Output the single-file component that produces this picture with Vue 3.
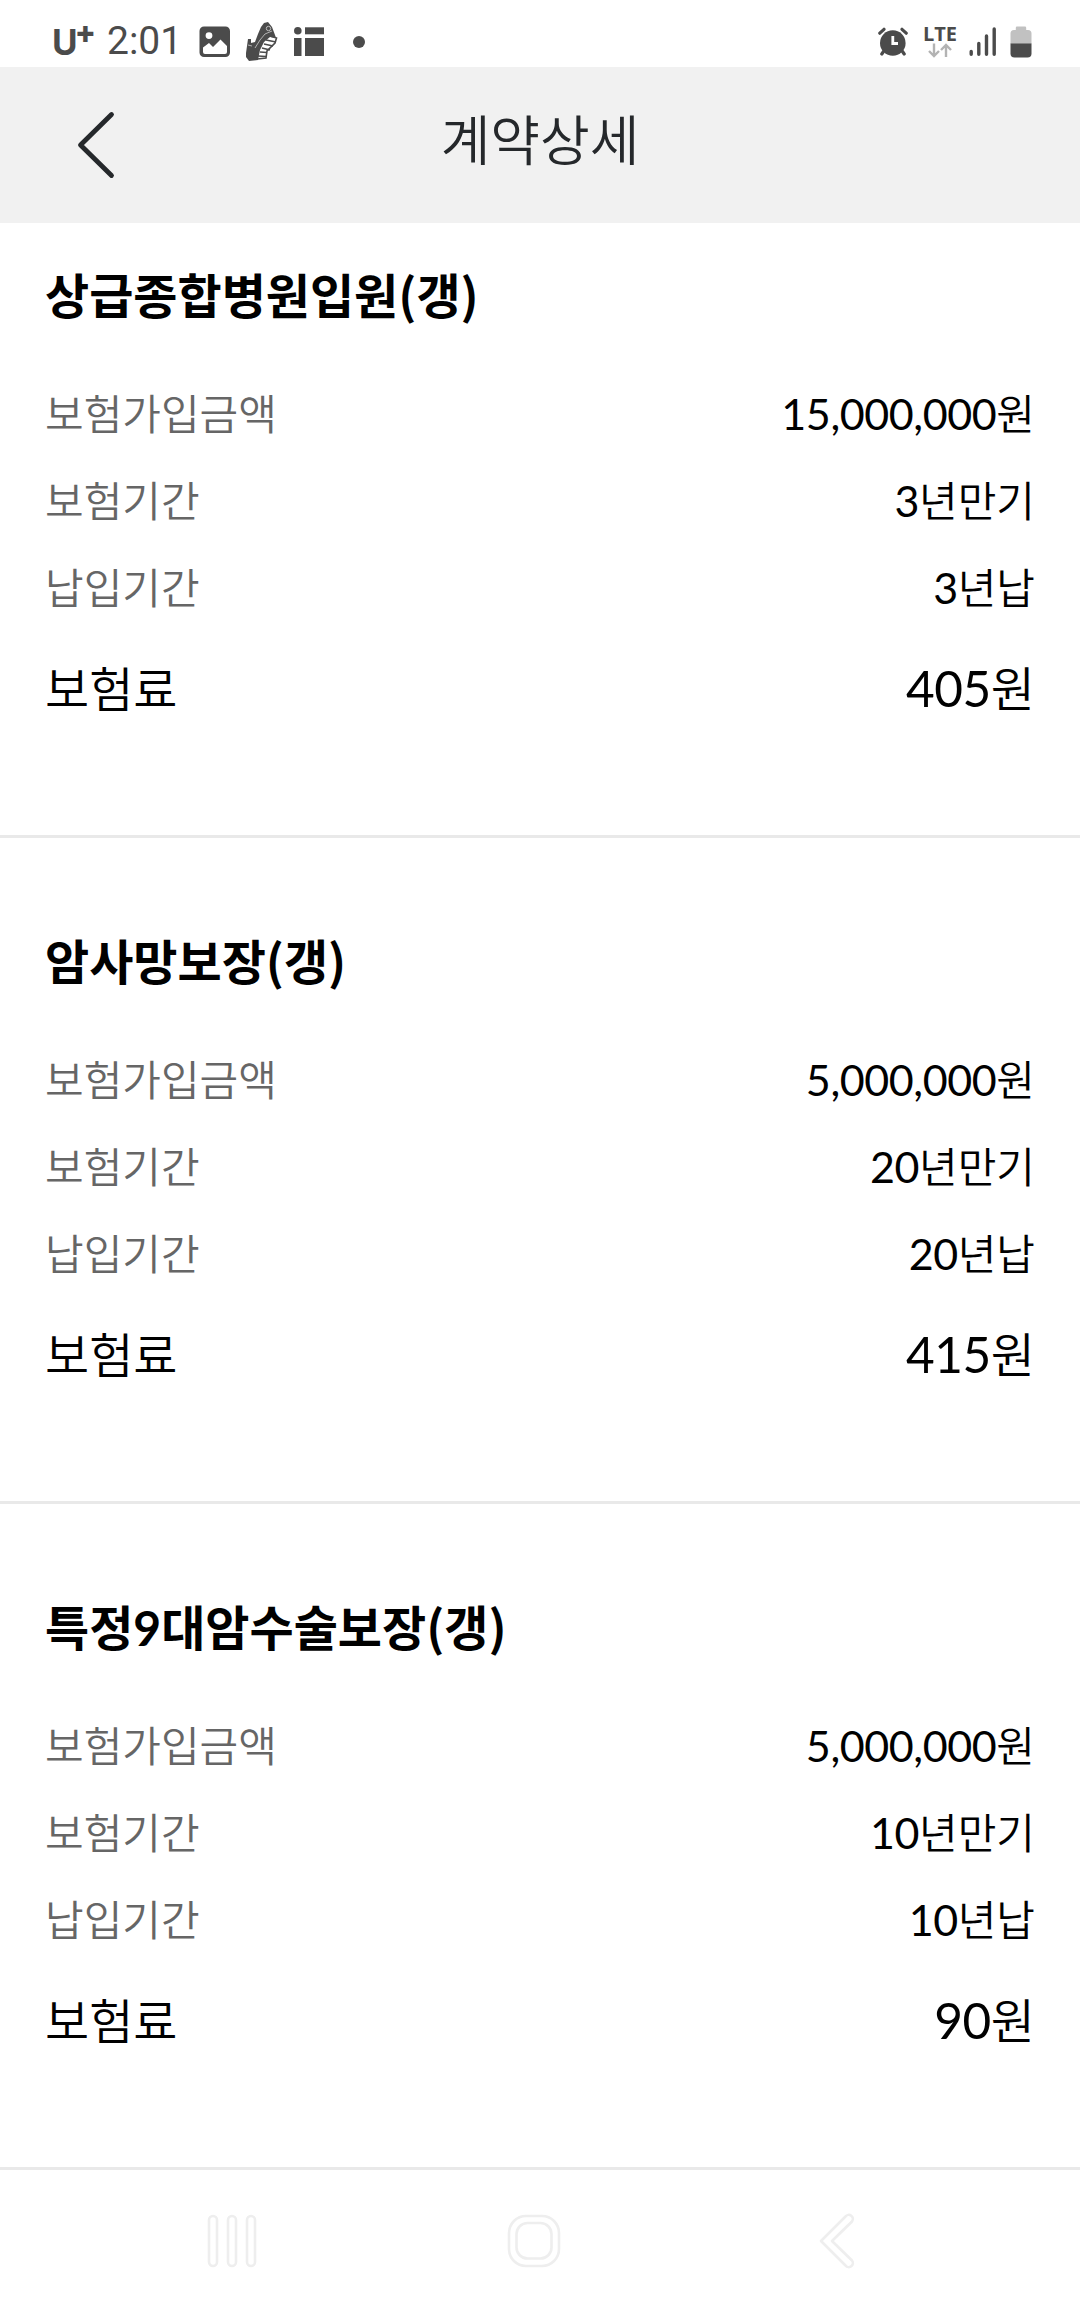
<template>
  <div class="screen">
    <div class="status-bar">
      <div class="status-left">
        <span class="carrier">U<span class="carrier-plus">+</span></span>
        <span class="clock">2:01</span>
        <svg class="ic-photo" width="32" height="32" viewBox="0 0 32 32">
          <path
            fill="#4b4b4b"
            fill-rule="evenodd"
            d="M5 0.5h21.5a4.5 4.5 0 0 1 4.5 4.5v21.500a4.500 4.500 0 0 1-4.500 4.500H5a4.500 4.500 0 0 1-4.500-4.500V5A4.500 4.500 0 0 1 5 .5zM10 6.200a3.400 3.400 0 1 0 0 6.800a3.400 3.400 0 0 0 0-6.800zM4 21.500V26q0 2 2 2h20q2 0 2-2v-6l-6.500-6.500l-7.500 7.500l-4-4z"
          />
        </svg>
        <svg class="ic-shoe" width="32" height="40" viewBox="0 0 32 40">
          <path fill="#4b4b4b" d="M0 31L1 24L2 17L5 17L5 21L9 20L12 12L15 5L18 1L22 0L26 5L29 13L30 16L24 15L18 20L14 28L12 38L3 39L0 35z" />
          <path d="M24 14L30.500 16L29 21L21 29L20 36L11 37" fill="none" stroke="#4b4b4b" stroke-width="1.600" />
          <path d="M20 18l10 2M18 22l9 2M16 26l8 2M14 30l7 .5M12 34l8 .5" stroke="#4b4b4b" stroke-width="1.700" />
          <path d="M9 26L14 18L19 12L26 9M2 23l4 1" fill="none" stroke="#bdbdbd" stroke-width="0.900" />
          <circle cx="22.500" cy="6.500" r="2.200" fill="none" stroke="#bdbdbd" stroke-width="1" />
        </svg>
        <svg class="ic-board" width="30" height="30" viewBox="0 0 30 30" fill="#4b4b4b">
          <circle cx="3.800" cy="3.800" r="3.800" />
          <rect x="11" y="0.300" width="19" height="7" />
          <rect x="0" y="11" width="7.500" height="18" />
          <rect x="11" y="11" width="19" height="18" />
        </svg>
        <i class="more-dot" />
      </div>

      <div class="status-right">
        <svg class="ic-alarm" width="30" height="30" viewBox="0 0 30 30">
          <circle cx="14.800" cy="16" r="12.800" fill="#4b4b4b" />
          <path d="M1.800 6.200L6 2.300M28.200 6.200L24 2.300M5.500 24.500L3.800 27M24.500 24.500L26.200 27" stroke="#4b4b4b" stroke-width="3.200" stroke-linecap="round" />
          <path d="M14.800 9v7.500H20" fill="none" stroke="#fff" stroke-width="2.800" />
        </svg>
        <div class="network">
          <span>LTE</span>
          <svg width="24" height="15" viewBox="0 0 24 15" fill="none" stroke="#b3b3b3" stroke-width="2.400">
            <path d="M6 0.500v12.500M1 8l5 5l5-5M18 14V2M13 7l5-5l5 5" />
          </svg>
        </div>
        <svg class="ic-signal" width="28" height="30" viewBox="0 0 28 30" stroke="#4b4b4b" stroke-width="3.400" stroke-linecap="round">
          <path d="M2.200 24.500v2.800M9.800 16.500v10.800M17.500 9v18.300M25.200 2v25.300" />
        </svg>
        <svg class="ic-battery" width="22" height="32" viewBox="0 0 22 32">
          <path fill="#c1c1c1" d="M7 .5h8q1.200 0 1.200 1.200V4H18q3.500 0 3.500 3.500V18H.5V7.500Q.5 4 4 4h1.800V1.700Q5.800 .5 7 .5z" />
          <path fill="#4b4b4b" d="M.5 17.500h21v10q0 4-4 4h-13q-4 0-4-4z" />
        </svg>
      </div>
    </div>

    <header class="page-header">
      <button class="btn-back" type="button" aria-label="이전">
        <svg width="38" height="68" viewBox="0 0 38 68">
          <path d="M34.500 3.500L3.500 34L34.500 64.500" fill="none" stroke="#25282b" stroke-width="4.800" stroke-linecap="round" stroke-linejoin="round" />
        </svg>
      </button>
      <h1>계약상세</h1>
    </header>

    <main class="contract-list">
      <section v-for="item in contracts" :key="item.name" class="contract">
        <h2>{{ item.name }}<span class="suffix">(갱)</span></h2>
        <dl>
          <div v-for="row in item.rows" :key="row.label" class="row">
            <dt>{{ row.label }}</dt>
            <dd><span class="num">{{ row.num }}</span>{{ row.unit }}</dd>
          </div>
          <div class="row row-fee">
            <dt>보험료</dt>
            <dd><span class="num">{{ item.fee }}</span>원</dd>
          </div>
        </dl>
      </section>
    </main>

    <nav class="nav-bar">
      <svg width="50" height="56" viewBox="0 0 50 56" fill="none" stroke="#eeeeee" stroke-width="2.600">
        <rect x="2" y="3" width="8" height="50" rx="4" />
        <rect x="21" y="3" width="8" height="50" rx="4" />
        <rect x="40" y="3" width="8" height="50" rx="4" />
      </svg>
      <svg class="ic-home" width="54" height="56" viewBox="0 0 54 56" fill="none" stroke="#eeeeee" stroke-width="2.600">
        <rect x="2" y="3" width="50" height="50" rx="17" />
        <rect x="9.500" y="10" width="35" height="35.500" rx="11" />
      </svg>
      <svg width="36" height="56" viewBox="0 0 36 56" fill="none" stroke="#eeeeee" stroke-width="2.600" stroke-linejoin="round">
        <path d="M26.500 3.500L2 28L26.500 52.500A4 4 0 0 0 33 47.500L13 28L33 8.500A4 4 0 0 0 26.500 3.500z" />
      </svg>
    </nav>
  </div>
</template>

<script setup>
const makeContract = (name, amount, years, fee) => ({
  name,
  fee,
  rows: [
    { label: "보험가입금액", num: amount, unit: "원" },
    { label: "보험기간", num: years, unit: "년만기" },
    { label: "납입기간", num: years, unit: "년납" },
  ],
});

const contracts = [
  makeContract("상급종합병원입원", "15,000,000", "3", "405"),
  makeContract("암사망보장", "5,000,000", "20", "415"),
  makeContract("특정9대암수술보장", "5,000,000", "10", "90"),
];
</script>

<style>
body {
  margin: 0;
  background: #fff;
}
</style>

<style scoped>
.screen {
  display: flex;
  flex-direction: column;
  width: 1080px;
  height: 2316px;
  overflow: hidden;
  background: #fff;
  color: #000;
  font-family: Lato, "Noto Sans CJK KR", sans-serif;
}

.status-bar {
  display: flex;
  justify-content: space-between;
  box-sizing: border-box;
  height: 67px;
  padding: 16px 48px 0 52px;
  color: #4b4b4b;
  font-family: Roboto, sans-serif;
}

.status-left,
.status-right {
  display: flex;
  align-items: center;
  height: 51px;
}

.carrier {
  display: flex;
  width: 55px;
  font-family: Inter, sans-serif;
  font-size: 35px;
  font-weight: 700;
  line-height: 52px;
}

.carrier-plus {
  margin: -10px 0 0 -3px;
  font-size: 31px;
  font-weight: 800;
}

.clock {
  width: 92px;
  font-size: 39px;
  line-height: 51px;
}

.ic-shoe {
  margin-left: 15px;
}

.ic-board {
  margin-left: 16px;
}

.more-dot {
  width: 12px;
  height: 12px;
  margin-left: 29px;
  border-radius: 50%;
  background: #4b4b4b;
}

.network {
  display: flex;
  flex-direction: column;
  align-items: center;
  width: 34px;
  margin: -2px 12px 0 15px;
  font-family: "Open Sans", sans-serif;
  font-size: 20px;
  font-weight: 700;
  line-height: 19px;
}

.ic-battery {
  margin-left: 13px;
}

.page-header {
  display: grid;
  grid-template-columns: 190px 1fr 190px;
  align-items: center;
  height: 156px;
  background: #f1f1f1;
  color: #25282b;
}

.btn-back {
  display: flex;
  justify-content: center;
  padding: 0 0 0 2px;
  border: 0;
  background: none;
}

.page-header h1 {
  margin: 0 0 8px;
  font-size: 54px;
  font-weight: 350;
  line-height: 80px;
  text-align: center;
}

.contract {
  box-sizing: border-box;
  height: 666px;
  padding: 89px 45px 0;
  border-bottom: 3px solid #e9e9e9;
}

/* the first block sits closer to the header */
.contract:first-child {
  height: 615px;
  padding-top: 38px;
}

.contract h2 {
  margin: 0 0 40px;
  font-size: 48px;
  font-weight: 700;
  line-height: 70px;
}

.suffix {
  font-family: "Noto Sans CJK KR", sans-serif;
  line-height: 1;
}

.contract dl {
  margin: 0;
}

.row {
  display: flex;
  justify-content: space-between;
  font-size: 42px;
  font-weight: 350;
  line-height: 87px;
}

.row dt {
  color: #666;
}

.row dd {
  margin: 0;
}

.num {
  font-size: 43px;
  font-weight: 400;
  letter-spacing: -0.4px;
  line-height: 1;
}

.row-fee {
  margin-top: 13px;
  font-size: 48px;
}

.row-fee dt {
  color: #000;
}

.row-fee .num {
  font-size: 49.5px;
  letter-spacing: -0.4px;
}

.nav-bar {
  display: flex;
  justify-content: space-between;
  flex: 1;
  padding: 43px 225px 0 207px;
}

.ic-home {
  margin-right: 8px;
}
</style>
